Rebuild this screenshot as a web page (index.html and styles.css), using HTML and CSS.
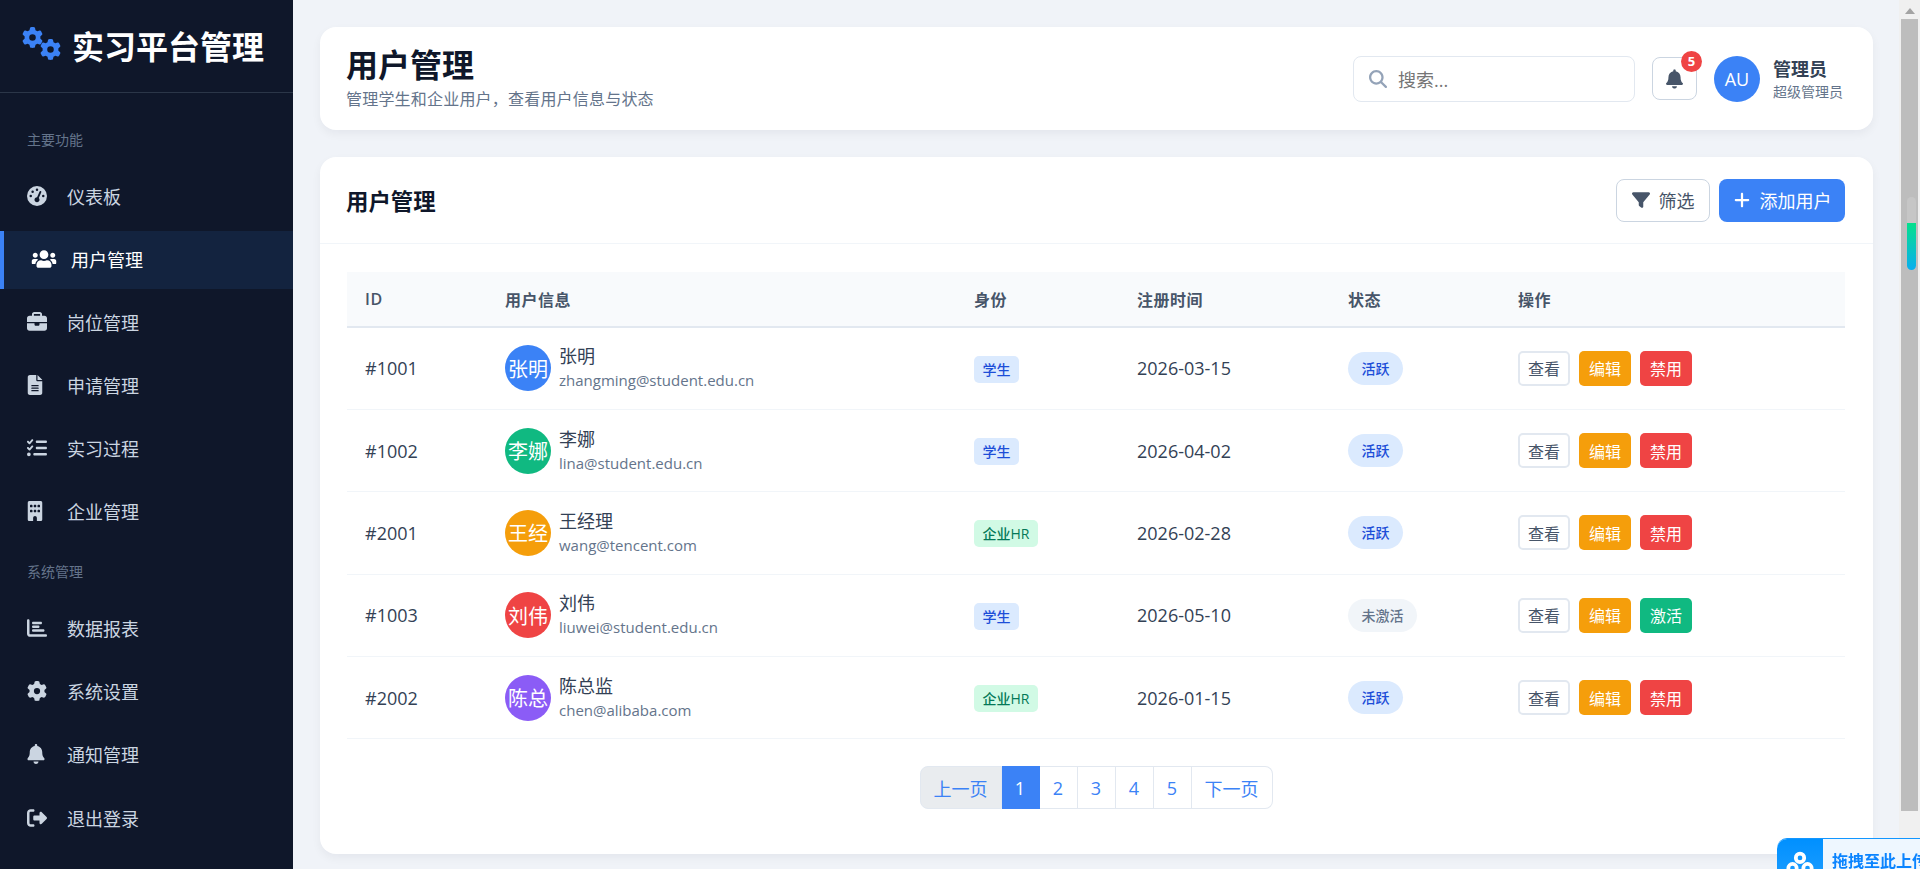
FILE: index.html
```html
<!DOCTYPE html>
<html lang="zh-CN">

<head>
  <meta charset="utf-8">
  <title>用户管理</title>
  <link rel="stylesheet" href="styles.css">
</head>

<body>
  <svg class="sprite" xmlns="http://www.w3.org/2000/svg">
    <symbol id="i-gauge" viewBox="0 0 512 512"><path d="M0 256a256 256 0 1 1 512 0A256 256 0 1 1 0 256zM288 96a32 32 0 1 0 -64 0 32 32 0 1 0 64 0zM256 416c35.3 0 64-28.7 64-64c0-17.4-6.9-33.1-18.1-44.6L366 161.7c5.3-12.1-.2-26.3-12.3-31.6s-26.3 .2-31.6 12.3L257.9 288c-.6 0-1.3 0-1.9 0c-35.3 0-64 28.7-64 64s28.7 64 64 64zM176 144a32 32 0 1 0 -64 0 32 32 0 1 0 64 0zM96 288a32 32 0 1 0 0-64 32 32 0 1 0 0 64zm352-32a32 32 0 1 0 -64 0 32 32 0 1 0 64 0z"/></symbol>
    <symbol id="i-users" viewBox="0 0 640 512"><path d="M96 224c35.3 0 64-28.7 64-64s-28.7-64-64-64-64 28.7-64 64 28.7 64 64 64zm448 0c35.3 0 64-28.7 64-64s-28.7-64-64-64-64 28.7-64 64 28.7 64 64 64zm32 32h-64c-17.6 0-33.5 7.1-45.1 18.6 40.3 22.1 68.9 62 75.1 109.4h66c17.7 0 32-14.3 32-32v-32c0-35.3-28.7-64-64-64zm-256 0c61.9 0 112-50.1 112-112S381.9 32 320 32 208 82.1 208 144s50.1 112 112 112zm76.8 32h-8.3c-20.8 10-43.9 16-68.5 16s-47.6-6-68.5-16h-8.3C179.6 288 128 339.6 128 403.2V432c0 26.5 21.5 48 48 48h288c26.5 0 48-21.5 48-48v-28.8c0-63.6-51.6-115.2-115.2-115.2zm-223.7-13.4C161.5 263.1 145.6 256 128 256H64c-35.3 0-64 28.7-64 64v32c0 17.7 14.3 32 32 32h65.9c6.3-47.4 34.9-87.3 75.2-109.4z"/></symbol>
    <symbol id="i-briefcase" viewBox="0 0 512 512"><path d="M184 48H328c4.4 0 8 3.6 8 8V96H176V56c0-4.4 3.6-8 8-8zm-56 8V96H64C28.7 96 0 124.7 0 160v96H192 320 512V160c0-35.3-28.7-64-64-64H384V56c0-30.9-25.1-56-56-56H184c-30.9 0-56 25.1-56 56zM512 288H320v32c0 17.7-14.3 32-32 32H224c-17.7 0-32-14.3-32-32V288H0V416c0 35.3 28.7 64 64 64H448c35.3 0 64-28.7 64-64V288z"/></symbol>
    <symbol id="i-file" viewBox="0 0 384 512"><path d="M64 0C28.7 0 0 28.7 0 64V448c0 35.3 28.7 64 64 64H320c35.3 0 64-28.7 64-64V160H256c-17.7 0-32-14.3-32-32V0H64zM256 0V128H384L256 0zM112 256H272c8.8 0 16 7.2 16 16s-7.2 16-16 16H112c-8.8 0-16-7.2-16-16s7.2-16 16-16zm0 64H272c8.8 0 16 7.2 16 16s-7.2 16-16 16H112c-8.8 0-16-7.2-16-16s7.2-16 16-16zm0 64H272c8.8 0 16 7.2 16 16s-7.2 16-16 16H112c-8.8 0-16-7.2-16-16s7.2-16 16-16z"/></symbol>
    <symbol id="i-tasks" viewBox="0 0 512 512"><path d="M152.1 38.2c9.9 8.9 10.7 24 1.8 33.9l-72 80c-4.4 4.9-10.6 7.8-17.2 7.9s-12.9-2.4-17.6-7L7 113C-2.3 103.6-2.3 88.4 7 79s24.6-9.4 33.9 0l22.1 22.1 55.1-61.2c8.9-9.9 24-10.7 33.9-1.8zm0 160c9.9 8.9 10.7 24 1.8 33.9l-72 80c-4.4 4.9-10.6 7.8-17.2 7.9s-12.9-2.4-17.6-7L7 273c-9.4-9.4-9.4-24.6 0-33.9s24.6-9.4 33.9 0l22.1 22.1 55.1-61.2c8.9-9.9 24-10.7 33.9-1.8zM224 96c0-17.7 14.3-32 32-32H480c17.7 0 32 14.3 32 32s-14.3 32-32 32H256c-17.7 0-32-14.3-32-32zm0 160c0-17.7 14.3-32 32-32H480c17.7 0 32 14.3 32 32s-14.3 32-32 32H256c-17.7 0-32-14.3-32-32zM160 416c0-17.7 14.3-32 32-32H480c17.7 0 32 14.3 32 32s-14.3 32-32 32H192c-17.7 0-32-14.3-32-32zM48 368a48 48 0 1 1 0 96 48 48 0 1 1 0-96z"/></symbol>
    <symbol id="i-building" viewBox="0 0 384 512"><path d="M48 0C21.5 0 0 21.5 0 48V464c0 26.5 21.5 48 48 48h96V432c0-26.5 21.5-48 48-48s48 21.5 48 48v80h96c26.5 0 48-21.5 48-48V48c0-26.5-21.5-48-48-48H48zM64 240c0-8.8 7.2-16 16-16h32c8.8 0 16 7.2 16 16v32c0 8.8-7.2 16-16 16H80c-8.8 0-16-7.2-16-16V240zm112-16h32c8.8 0 16 7.2 16 16v32c0 8.8-7.2 16-16 16H176c-8.8 0-16-7.2-16-16V240c0-8.8 7.2-16 16-16zm80 16c0-8.8 7.2-16 16-16h32c8.8 0 16 7.2 16 16v32c0 8.8-7.2 16-16 16H272c-8.8 0-16-7.2-16-16V240zM80 96h32c8.8 0 16 7.2 16 16v32c0 8.8-7.2 16-16 16H80c-8.8 0-16-7.2-16-16V112c0-8.8 7.2-16 16-16zm80 16c0-8.8 7.2-16 16-16h32c8.8 0 16 7.2 16 16v32c0 8.8-7.2 16-16 16H176c-8.8 0-16-7.2-16-16V112zM272 96h32c8.8 0 16 7.2 16 16v32c0 8.8-7.2 16-16 16H272c-8.8 0-16-7.2-16-16V112c0-8.8 7.2-16 16-16z"/></symbol>
    <symbol id="i-chart" viewBox="0 0 512 512"><path d="M32 32c17.7 0 32 14.3 32 32V400c0 8.8 7.2 16 16 16H480c17.7 0 32 14.3 32 32s-14.3 32-32 32H80c-44.2 0-80-35.8-80-80V64C0 46.3 14.3 32 32 32zm96 96c0-17.7 14.3-32 32-32l192 0c17.7 0 32 14.3 32 32s-14.3 32-32 32l-192 0c-17.7 0-32-14.3-32-32zm32 64H288c17.7 0 32 14.3 32 32s-14.3 32-32 32H160c-17.7 0-32-14.3-32-32s14.3-32 32-32zm0 96H416c17.7 0 32 14.3 32 32s-14.3 32-32 32H160c-17.7 0-32-14.3-32-32s14.3-32 32-32z"/></symbol>
    <symbol id="i-gear" viewBox="0 0 512 512"><path d="M495.9 166.6c3.2 8.7 .5 18.4-6.4 24.6l-43.3 39.4c1.1 8.3 1.7 16.8 1.7 25.4s-.6 17.1-1.7 25.4l43.3 39.4c6.9 6.2 9.6 15.9 6.4 24.6c-4.4 11.9-9.7 23.3-15.8 34.3l-4.7 8.1c-6.6 11-14 21.4-22.1 31.2c-5.9 7.2-15.7 9.6-24.5 6.8l-55.7-17.7c-13.4 10.3-28.2 18.9-44 25.4l-12.5 57.1c-2 9.1-9 16.3-18.2 17.8c-13.8 2.3-28 3.5-42.5 3.5s-28.7-1.2-42.5-3.5c-9.2-1.5-16.2-8.7-18.2-17.8l-12.5-57.1c-15.8-6.5-30.6-15.1-44-25.4L83.1 425.9c-8.8 2.8-18.6 .3-24.5-6.8c-8.1-9.8-15.5-20.2-22.1-31.2l-4.7-8.1c-6.1-11-11.4-22.4-15.8-34.3c-3.2-8.7-.5-18.4 6.4-24.6l43.3-39.4C64.6 273.1 64 264.6 64 256s.6-17.1 1.7-25.4L22.4 191.2c-6.9-6.2-9.6-15.9-6.4-24.6c4.4-11.9 9.7-23.3 15.8-34.3l4.7-8.1c6.6-11 14-21.4 22.1-31.2c5.9-7.2 15.7-9.6 24.5-6.8l55.7 17.7c13.4-10.3 28.2-18.9 44-25.4l12.5-57.1c2-9.1 9-16.3 18.2-17.8C227.3 1.2 241.5 0 256 0s28.7 1.2 42.5 3.5c9.2 1.5 16.2 8.7 18.2 17.8l12.5 57.1c15.8 6.5 30.6 15.1 44 25.4l55.7-17.7c8.8-2.8 18.6-.3 24.5 6.8c8.1 9.8 15.5 20.2 22.1 31.2l4.7 8.1c6.1 11 11.4 22.4 15.8 34.3zM256 336a80 80 0 1 0 0-160 80 80 0 1 0 0 160z"/></symbol>
    <symbol id="i-bell" viewBox="0 0 448 512"><path d="M224 512c35.32 0 63.97-28.65 63.97-64H160.03c0 35.35 28.65 64 63.97 64zm215.39-149.71c-19.32-20.76-55.47-51.99-55.47-154.29 0-77.7-54.48-139.9-127.94-155.16V32c0-17.67-14.32-32-31.98-32s-31.98 14.33-31.98 32v20.84C118.56 68.1 64.08 130.3 64.08 208c0 102.3-36.15 133.53-55.47 154.29-6 6.45-8.66 14.16-8.61 21.71.11 16.4 12.98 32 32.1 32h383.8c19.12 0 32-15.6 32.1-32 .05-7.55-2.61-15.27-8.61-21.71z"/></symbol>
    <symbol id="i-logout" viewBox="0 0 512 512"><path d="M377.9 105.9L500.7 228.7c7.2 7.2 11.3 17.1 11.3 27.3s-4.1 20.1-11.3 27.3L377.9 406.1c-6.4 6.4-15 9.9-24 9.9c-18.7 0-33.9-15.2-33.9-33.9l0-62.1-128 0c-17.7 0-32-14.3-32-32l0-64c0-17.7 14.3-32 32-32l128 0 0-62.1c0-18.7 15.2-33.9 33.9-33.9c9 0 17.6 3.6 24 9.9zM160 96L96 96c-17.7 0-32 14.3-32 32l0 256c0 17.7 14.3 32 32 32l64 0c17.7 0 32 14.3 32 32s-14.3 32-32 32l-64 0c-53 0-96-43-96-96L0 128C0 75 43 32 96 32l64 0c17.7 0 32 14.3 32 32s-14.3 32-32 32z"/></symbol>
    <symbol id="i-search" viewBox="0 0 512 512"><path d="M416 208c0 45.9-14.9 88.3-40 122.7L502.6 457.4c12.5 12.5 12.5 32.8 0 45.3s-32.8 12.5-45.3 0L330.7 376c-34.4 25.2-76.8 40-122.7 40C93.1 416 0 322.9 0 208S93.1 0 208 0S416 93.1 416 208zM208 352a144 144 0 1 0 0-288 144 144 0 1 0 0 288z"/></symbol>
    <symbol id="i-filter" viewBox="0 0 512 512"><path d="M3.9 54.9C10.5 40.9 24.5 32 40 32H472c15.5 0 29.5 8.9 36.1 22.9s4.6 30.5-5.2 42.5L320 320.9V448c0 12.1-6.8 23.2-17.7 28.6s-23.8 4.3-33.5-3l-64-48c-8.1-6-12.8-15.5-12.8-25.6V320.9L9 97.3C-.7 85.4-2.8 68.8 3.9 54.9z"/></symbol>
    <symbol id="i-plus" viewBox="0 0 448 512"><path d="M256 80c0-17.7-14.3-32-32-32s-32 14.3-32 32V224H48c-17.7 0-32 14.3-32 32s14.3 32 32 32H192V432c0 17.7 14.3 32 32 32s32-14.3 32-32V288H400c17.7 0 32-14.3 32-32s-14.3-32-32-32H256V80z"/></symbol>
  </svg>

  <div class="layout">
    <aside class="sidebar">
      <div class="brand">
        <svg class="brand-logo" viewBox="0 0 40 36">
          <use href="#i-gear" x="0" y="0" width="21" height="21"/>
          <use href="#i-gear" x="18" y="12" width="21" height="21"/>
        </svg>
        <span>实习平台管理</span>
      </div>

      <nav class="nav">
        <div class="nav-label">主要功能</div>
        <a class="nav-item"><span class="nav-icon"><svg viewBox="0 0 512 512"><use href="#i-gauge"/></svg></span>仪表板</a>
        <a class="nav-item active"><span class="nav-icon"><svg class="wide" viewBox="0 0 640 512"><use href="#i-users"/></svg></span>用户管理</a>
        <a class="nav-item"><span class="nav-icon"><svg viewBox="0 0 512 512"><use href="#i-briefcase"/></svg></span>岗位管理</a>
        <a class="nav-item"><span class="nav-icon"><svg class="narrow" viewBox="0 0 384 512"><use href="#i-file"/></svg></span>申请管理</a>
        <a class="nav-item"><span class="nav-icon"><svg viewBox="0 0 512 512"><use href="#i-tasks"/></svg></span>实习过程</a>
        <a class="nav-item"><span class="nav-icon"><svg class="narrow" viewBox="0 0 384 512"><use href="#i-building"/></svg></span>企业管理</a>
        <div class="nav-label second">系统管理</div>
        <a class="nav-item"><span class="nav-icon"><svg viewBox="0 0 512 512"><use href="#i-chart"/></svg></span>数据报表</a>
        <a class="nav-item"><span class="nav-icon"><svg viewBox="0 0 512 512"><use href="#i-gear"/></svg></span>系统设置</a>
        <a class="nav-item"><span class="nav-icon"><svg class="bell" viewBox="0 0 448 512"><use href="#i-bell"/></svg></span>通知管理</a>
        <a class="nav-item"><span class="nav-icon"><svg viewBox="0 0 512 512"><use href="#i-logout"/></svg></span>退出登录</a>
      </nav>
    </aside>

    <main class="main">
      <header class="card topbar">
        <div class="page-title">
          <h1>用户管理</h1>
          <p>管理学生和企业用户，查看用户信息与状态</p>
        </div>
        <div class="topbar-right">
          <div class="search">
            <svg viewBox="0 0 512 512"><use href="#i-search"/></svg>
            <span>搜索...</span>
          </div>
          <button class="bell-button">
            <svg viewBox="0 0 448 512"><use href="#i-bell"/></svg>
            <span class="badge">5</span>
          </button>
          <div class="user">
            <div class="user-avatar">AU</div>
            <div class="user-text">
              <strong>管理员</strong>
              <small>超级管理员</small>
            </div>
          </div>
        </div>
      </header>

      <section class="card panel">
        <div class="panel-head">
          <h2>用户管理</h2>
          <div class="panel-actions">
            <button class="button button-outline"><svg viewBox="0 0 512 512"><use href="#i-filter"/></svg>筛选</button>
            <button class="button button-primary"><svg viewBox="0 0 448 512"><use href="#i-plus"/></svg>添加用户</button>
          </div>
        </div>

        <div class="panel-body">
          <table class="users">
            <thead>
              <tr>
                <th class="col-id">ID</th>
                <th class="col-user">用户信息</th>
                <th class="col-role">身份</th>
                <th class="col-date">注册时间</th>
                <th class="col-status">状态</th>
                <th>操作</th>
              </tr>
            </thead>
            <tbody>
              <tr>
                <td>#1001</td>
                <td><div class="person"><div class="avatar blue">张明</div><div><div class="name">张明</div><div class="email">zhangming@student.edu.cn</div></div></div></td>
                <td><span class="tag tag-student">学生</span></td>
                <td>2026-03-15</td>
                <td><span class="pill pill-active">活跃</span></td>
                <td><div class="ops"><button class="op op-view">查看</button><button class="op op-edit">编辑</button><button class="op op-ban">禁用</button></div></td>
              </tr>
              <tr>
                <td>#1002</td>
                <td><div class="person"><div class="avatar green">李娜</div><div><div class="name">李娜</div><div class="email">lina@student.edu.cn</div></div></div></td>
                <td><span class="tag tag-student">学生</span></td>
                <td>2026-04-02</td>
                <td><span class="pill pill-active">活跃</span></td>
                <td><div class="ops"><button class="op op-view">查看</button><button class="op op-edit">编辑</button><button class="op op-ban">禁用</button></div></td>
              </tr>
              <tr>
                <td>#2001</td>
                <td><div class="person"><div class="avatar orange">王经</div><div><div class="name">王经理</div><div class="email">wang@tencent.com</div></div></div></td>
                <td><span class="tag tag-hr">企业HR</span></td>
                <td>2026-02-28</td>
                <td><span class="pill pill-active">活跃</span></td>
                <td><div class="ops"><button class="op op-view">查看</button><button class="op op-edit">编辑</button><button class="op op-ban">禁用</button></div></td>
              </tr>
              <tr>
                <td>#1003</td>
                <td><div class="person"><div class="avatar red">刘伟</div><div><div class="name">刘伟</div><div class="email">liuwei@student.edu.cn</div></div></div></td>
                <td><span class="tag tag-student">学生</span></td>
                <td>2026-05-10</td>
                <td><span class="pill pill-idle">未激活</span></td>
                <td><div class="ops"><button class="op op-view">查看</button><button class="op op-edit">编辑</button><button class="op op-on">激活</button></div></td>
              </tr>
              <tr>
                <td>#2002</td>
                <td><div class="person"><div class="avatar purple">陈总</div><div><div class="name">陈总监</div><div class="email">chen@alibaba.com</div></div></div></td>
                <td><span class="tag tag-hr">企业HR</span></td>
                <td>2026-01-15</td>
                <td><span class="pill pill-active">活跃</span></td>
                <td><div class="ops"><button class="op op-view">查看</button><button class="op op-edit">编辑</button><button class="op op-ban">禁用</button></div></td>
              </tr>
            </tbody>
          </table>

          <div class="pagination">
            <a class="page-link disabled">上一页</a>
            <a class="page-link page-num current">1</a>
            <a class="page-link page-num">2</a>
            <a class="page-link page-num">3</a>
            <a class="page-link page-num">4</a>
            <a class="page-link page-num">5</a>
            <a class="page-link">下一页</a>
          </div>
        </div>
      </section>
    </main>

    <div class="scrollbar">
      <div class="scroll-arrow"></div>
      <div class="scroll-thumb">
        <div class="scroll-grip"></div>
      </div>
    </div>
  </div>

  <div class="upload-float">
    <div class="upload-tile">
      <svg viewBox="0 0 32 28">
        <g fill="none" stroke="#fff" stroke-width="4">
          <circle cx="16" cy="8" r="4.5"/>
          <circle cx="8" cy="19" r="4.5"/>
          <circle cx="24" cy="19" r="4.5"/>
        </g>
      </svg>
    </div>
    <span>拖拽至此上传</span>
  </div>
</body>

</html>
```

FILE: styles.css
```css
* {
  box-sizing: border-box;
}

html,
body {
  margin: 0;
  height: 100%;
  overflow: hidden;
}

body {
  font-family: "Open Sans", "Noto Sans CJK SC", sans-serif;
  font-size: 16px;
  color: #334155;
  background: #f0f3f8;
}

.sprite {
  display: none;
}

svg {
  fill: currentColor;
}

button {
  font-family: inherit;
}

.layout {
  display: flex;
  height: 869px;
}

/* sidebar */
.sidebar {
  flex: 0 0 293px;
  background: #0f172a;
  color: #cbd5e1;
}

.brand {
  display: flex;
  align-items: center;
  gap: 10px;
  height: 93px;
  padding: 0 22px 2px;
  border-bottom: 1px solid #2b3648;
  font-size: 32px;
  font-weight: 700;
  color: #fff;
  white-space: nowrap;
}

.brand-logo {
  width: 40px;
  height: 36px;
  color: #3b82f6;
}

.nav {
  padding-top: 36px;
}

.nav-label {
  height: 22px;
  margin-bottom: 16.5px;
  padding-left: 27px;
  font-size: 14px;
  line-height: 22px;
  color: #64748b;
}

.nav-label.second {
  margin: 19.5px 0 17px;
}

.nav-item {
  display: flex;
  align-items: center;
  height: 58px;
  margin-bottom: 5.2px;
  padding: 0 0 2px 27px;
  font-size: 18px;
  color: #cbd5e1;
}

.nav-item.active {
  border-left: 4px solid #3b82f6;
  background: #13233f;
  color: #fff;
}

.nav-icon {
  display: flex;
  flex: 0 0 40px;
  align-items: center;
}

.nav-icon svg {
  width: 20px;
  height: 20px;
}

.nav-icon svg.wide {
  width: 26px;
}

.nav-icon svg.narrow {
  width: 16px;
}

.nav-icon svg.bell {
  width: 18px;
}

/* main column */
.main {
  flex: 1;
  min-width: 0;
  padding: 27px 26px 0 27px;
}

.card {
  background: #fff;
  border-radius: 16px;
  box-shadow: 0 4px 10px rgba(15, 23, 42, 0.05);
}

.topbar {
  display: flex;
  align-items: center;
  justify-content: space-between;
  height: 103px;
  margin-bottom: 27px;
  padding: 0 27px 0 26px;
}

.page-title {
  padding-bottom: 2px;
}

.page-title h1 {
  margin: 0;
  font-size: 32px;
  line-height: 38px;
  font-weight: 700;
  color: #0f172a;
}

.page-title p {
  margin: 4px 0 0;
  font-size: 16px;
  line-height: 22px;
  letter-spacing: 0.2px;
  color: #64748b;
}

.topbar-right {
  display: flex;
  align-items: center;
}

.search {
  display: flex;
  align-items: center;
  gap: 11px;
  width: 282px;
  height: 46px;
  margin-right: 17px;
  padding: 0 15px;
  border: 1px solid #e2e8f0;
  border-radius: 8px;
  font-size: 18px;
  color: #757575;
}

.search svg {
  width: 18px;
  height: 18px;
  color: #94a3b8;
}

.bell-button {
  position: relative;
  width: 45px;
  height: 43px;
  margin-right: 17px;
  padding: 0;
  border: 1px solid #cbd5e1;
  border-radius: 8px;
  background: #fff;
  color: #475569;
}

.bell-button svg {
  width: 17px;
  height: 20px;
  vertical-align: middle;
}

.badge {
  position: absolute;
  top: -7px;
  right: -6px;
  width: 21px;
  height: 21px;
  border-radius: 50%;
  background: #ef4444;
  color: #fff;
  font-size: 13px;
  font-weight: 700;
  line-height: 21px;
  text-align: center;
}

.user {
  display: flex;
  align-items: center;
  gap: 13px;
  margin-right: 1px;
}

.user-avatar {
  display: flex;
  align-items: center;
  justify-content: center;
  width: 46px;
  height: 46px;
  border-radius: 50%;
  background: #3b82f6;
  color: #fff;
  font-size: 18px;
}

.user-text {
  width: 72px;
}

.user-text strong {
  display: block;
  font-size: 18px;
  line-height: 25px;
  color: #334155;
}

.user-text small {
  display: block;
  font-size: 14px;
  line-height: 19px;
  color: #64748b;
}

/* user table panel */
.panel {
  height: 697px;
}

.panel-head {
  display: flex;
  align-items: center;
  justify-content: space-between;
  height: 87px;
  padding: 0 28px 0 26px;
  border-bottom: 1px solid #f1f5f9;
}

.panel-head h2 {
  margin: 0;
  font-size: 22.4px;
  font-weight: 700;
  color: #0f172a;
}

.panel-actions {
  display: flex;
  gap: 9px;
}

.button {
  display: flex;
  align-items: center;
  gap: 9px;
  height: 43px;
  border-radius: 8px;
  font-size: 18px;
}

.button svg {
  width: 18px;
  height: 18px;
}

.button-outline {
  padding: 0 14.5px;
  border: 1px solid #cbd5e1;
  background: #fff;
  color: #475569;
}

.button-primary {
  padding: 0 13.5px;
  border: 0;
  background: #3b82f6;
  color: #fff;
}

.panel-body {
  padding: 28px 28px 0 27px;
}

.users {
  width: 100%;
  table-layout: fixed;
  border-collapse: collapse;
}

.col-id {
  width: 140px;
}

.col-user {
  width: 469px;
}

.col-role {
  width: 163px;
}

.col-date {
  width: 211px;
}

.col-status {
  width: 170px;
}

.users th {
  height: 55px;
  padding: 0 18px;
  border-bottom: 2px solid #e2e8f0;
  background: #f8fafc;
  font-size: 16px;
  font-weight: 600;
  letter-spacing: 0.5px;
  text-align: left;
  color: #475569;
}

.users td {
  height: 82.4px;
  padding: 0 18px;
  border-bottom: 1px solid #f1f5f9;
  font-size: 18px;
  color: #334155;
}

.person {
  display: flex;
  align-items: center;
  gap: 8px;
}

.avatar {
  display: flex;
  flex: 0 0 46px;
  align-items: center;
  justify-content: center;
  height: 46px;
  border-radius: 50%;
  color: #fff;
  font-size: 20px;
  white-space: nowrap;
}

.blue {
  background: #3b82f6;
}

.green {
  background: #10b981;
}

.orange {
  background: #f59e0b;
}

.red {
  background: #ef4444;
}

.purple {
  background: #8b5cf6;
}

.name {
  margin-top: -1px;
  font-size: 18px;
  line-height: 25px;
}

.email {
  font-size: 15px;
  line-height: 22px;
  color: #64748b;
}

.tag {
  display: inline-block;
  position: relative;
  top: 1px;
  padding: 4px 8.5px;
  border-radius: 5px;
  font-size: 14px;
  line-height: 19px;
  font-weight: 500;
}

.tag-student {
  background: #dbeafe;
  color: #1d4ed8;
}

.tag-hr {
  background: #d1fae5;
  color: #047857;
}

.pill {
  display: inline-block;
  padding: 7px 13.5px;
  border-radius: 17px;
  font-size: 14px;
  line-height: 19px;
  font-weight: 500;
}

.pill-active {
  background: #dbeafe;
  color: #1d4ed8;
}

.pill-idle {
  background: #f1f5f9;
  color: #64748b;
}

.ops {
  display: flex;
  gap: 9px;
}

.op {
  width: 52px;
  height: 35px;
  padding: 0;
  border: 0;
  border-radius: 5px;
  font-size: 16px;
  color: #fff;
}

.op-view {
  border: 2px solid #e2e8f0;
  background: #fff;
  color: #475569;
}

.op-edit {
  background: #f59e0b;
}

.op-ban {
  background: #ef4444;
}

.op-on {
  background: #10b981;
}

.pagination {
  display: flex;
  justify-content: center;
  margin-top: 27px;
}

.page-link {
  display: flex;
  align-items: center;
  height: 43px;
  padding: 0 13px;
  border: 1px solid #e2e8f0;
  border-left: 0;
  background: #fff;
  font-size: 18px;
  color: #3b82f6;
}

.page-num {
  justify-content: center;
  width: 38px;
  padding: 0;
}

.page-link:first-child {
  border-left: 1px solid #e2e8f0;
  border-radius: 8px 0 0 8px;
}

.page-link:last-child {
  border-radius: 0 8px 8px 0;
}

.page-link.disabled {
  background: #e9ecef;
}

.page-link.current {
  background: #3b82f6;
  border-color: #3b82f6;
  color: #fff;
}

/* browser scrollbar with its extension marker */
.scrollbar {
  flex: 0 0 21px;
  background: #f0f0f0;
}

.scroll-arrow {
  width: 0;
  height: 0;
  margin: 8px auto 5px;
  border: 5px solid transparent;
  border-top: 0;
  border-bottom: 6px solid #a3a3a3;
}

.scroll-thumb {
  position: relative;
  width: 17px;
  height: 792px;
  margin-left: 2px;
  background: #bdbdbd;
}

.scroll-grip {
  position: absolute;
  top: 178px;
  left: 6px;
  width: 9px;
  height: 73px;
  border-radius: 5px;
  background: linear-gradient(#c6c6c6 0, #c6c6c6 26px, #05e08c 26px, #0aaeef 100%);
}

/* floating upload widget, cut off by the window */
.upload-float {
  position: fixed;
  top: 838px;
  left: 1777px;
  display: flex;
  gap: 9px;
  width: 260px;
  height: 60px;
  border-top: 1px solid #1296ff;
  border-radius: 10px 0 0 0;
  background: #eef7ff;
  color: #0a84ff;
  font-size: 16px;
  font-weight: 700;
  white-space: nowrap;
}

.upload-tile {
  display: flex;
  justify-content: center;
  width: 46px;
  height: 60px;
  padding-top: 11px;
  border-radius: 10px 0 0 0;
  background: linear-gradient(#0090ff, #2aa3ff);
}

.upload-tile svg {
  width: 30px;
  height: 27px;
}

.upload-float span {
  padding-top: 9px;
}
```
